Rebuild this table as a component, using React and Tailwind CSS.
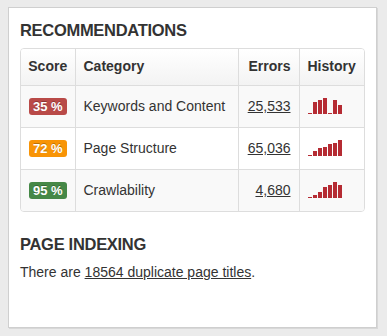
const rows = [
  { score: '35 %', color: 'bg-[#b94a48]', category: 'Keywords and Content', errors: '25,533', bars: [1, 12, 14, 16, 1, 14, 9] },
  { score: '72 %', color: 'bg-[#f89406]', category: 'Page Structure', errors: '65,036', bars: [1, 5, 8, 9, 12, 13, 16] },
  { score: '95 %', color: 'bg-[#468847]', category: 'Crawlability', errors: '4,680', bars: [1, 3, 6, 11, 13, 16, 13] },
];

function Spark({ bars }) {
  return (
    <div className="flex items-end gap-px h-4">
      {bars.map((h, i) => (
        <div key={i} className="w-1 bg-[#b52b33]" style={{ height: h }} />
      ))}
    </div>
  );
}

export default function App() {
  return (
    <div className="min-h-screen bg-[#ebebeb] pt-[7px] pl-2 pr-[10px]" style={{ fontFamily: '"Liberation Sans", Arial, sans-serif' }}>
      <div className="h-[321px] bg-white border border-[#cfcfcf] shadow-[1px_1px_0_#d8d8d8] px-[11px] pt-[12px] text-[#333]">
        <h2 className="text-[16.5px] font-bold leading-5 tracking-[-0.3px]">RECOMMENDATIONS</h2>

        {/* Table */}
        <div className="mt-[8px] border border-[#dddddd] rounded-[4px] overflow-hidden">
          <table className="w-full table-fixed border-collapse text-[14px]">
            <thead>
              <tr className="h-[36px] bg-gradient-to-b from-white to-[#f3f3f3]">
                <th className="w-[54px] text-center font-bold border-r border-[#ddd]">Score</th>
                <th className="w-[163px] text-left font-bold pl-2 border-r border-[#ddd]">Category</th>
                <th className="w-[61px] text-right font-bold pr-2 border-r border-[#ddd]">Errors</th>
                <th className="text-left font-bold pl-2">History</th>
              </tr>
            </thead>
            <tbody>
              {rows.map((r, i) => (
                <tr key={i} className={`h-[42px] border-t border-[#ddd] ${i % 2 === 0 ? 'bg-[#f9f9f9]' : 'bg-white'}`}>
                  <td className="text-center border-r border-[#ddd]">
                    <span className={`inline-block ${r.color} text-white font-bold text-[13px] leading-[17px] px-1 rounded-[3px] [text-shadow:0_-1px_0_rgba(0,0,0,0.25)]`}>
                      {r.score}
                    </span>
                  </td>
                  <td className="pl-2 border-r border-[#ddd]">{r.category}</td>
                  <td className="text-right pr-2 border-r border-[#ddd]">
                    <a className="underline">{r.errors}</a>
                  </td>
                  <td className="pl-2">
                    <Spark bars={r.bars} />
                  </td>
                </tr>
              ))}
            </tbody>
          </table>
        </div>

        <h2 className="mt-[22px] text-[16.5px] font-bold leading-5 tracking-[-0.3px]">PAGE INDEXING</h2>
        <p className="mt-[8px] text-[14px] leading-5">
          There are <a className="underline">18564 duplicate page titles</a>.
        </p>
      </div>
    </div>
  );
}
